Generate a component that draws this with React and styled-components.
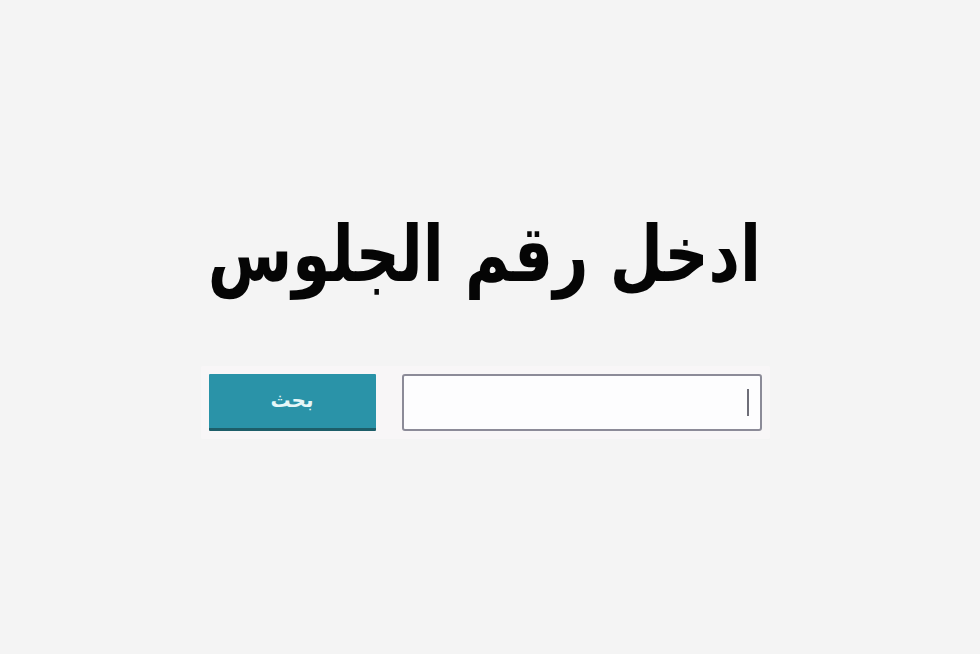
import React from "react";
import styled, { createGlobalStyle } from "styled-components";

const Global = createGlobalStyle`
  html, body { margin: 0; padding: 0; }
  body {
    background: #f4f4f4;
    font-family: "DejaVu Sans", "Noto Sans", sans-serif;
  }
`;

const Page = styled.div`
  width: 980px;
  height: 654px;
  display: flex;
  flex-direction: column;
  align-items: center;
  box-sizing: border-box;
  padding-top: 194px;
  background: #f4f4f4;
`;

const Title = styled.h1`
  margin: 0;
  direction: rtl;
  font-family: "DejaVu Sans", sans-serif;
  font-weight: bold;
  font-size: 78px;
  line-height: 120px;
  color: #050505;
  transform: translateX(-6px) scaleX(0.785);
`;

const Form = styled.form`
  margin-top: 52px;
  display: flex;
  direction: rtl;
  gap: 26px;
  padding: 8px 8px;
  background: #f8f6f7;
  border-radius: 2px;
  transform: translateX(-5px);
`;

const Field = styled.div`
  position: relative;
  width: 360px;
  height: 57px;
  box-sizing: border-box;
  background: #fdfdfe;
  border: 2px solid #8c8b98;
  border-radius: 3px;
`;

const Caret = styled.span`
  position: absolute;
  right: 11px;
  top: 13px;
  width: 2px;
  height: 27px;
  background: #6e6e78;
`;

const Button = styled.button`
  width: 167px;
  height: 57px;
  box-sizing: border-box;
  border: none;
  border-bottom: 3px solid #1d5e69;
  border-radius: 1px;
  background: #2a93a8;
  color: #e6f7f8;
  font-family: "DejaVu Sans", sans-serif;
  font-weight: bold;
  font-size: 20px;
  padding: 0 0 2px;
  cursor: pointer;
`;

export default function App() {
  return (
    <>
      <Global />
      <Page>
        <Title>ادخل رقم الجلوس</Title>
        <Form onSubmit={(e) => e.preventDefault()}>
          <Field>
            <Caret />
          </Field>
          <Button type="submit">بحث</Button>
        </Form>
      </Page>
    </>
  );
}
